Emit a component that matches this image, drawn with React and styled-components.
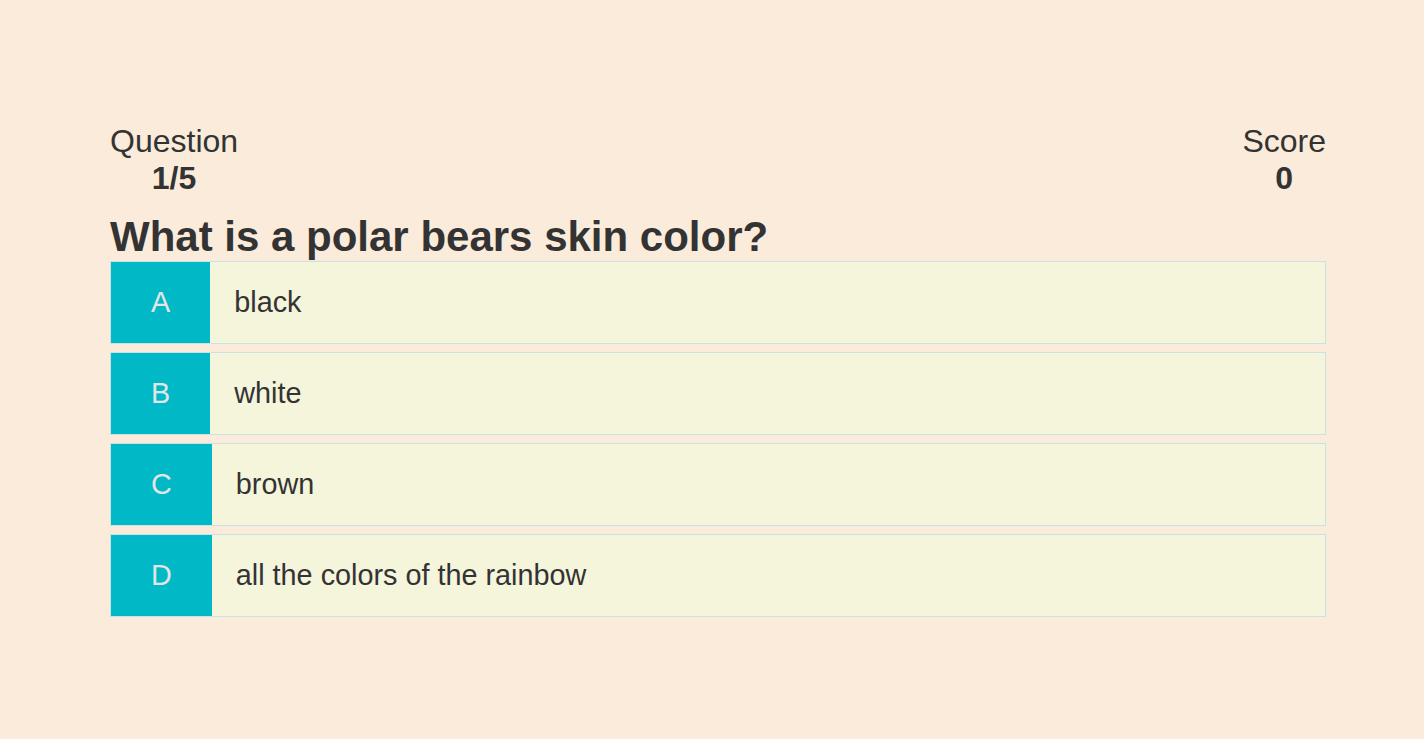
import React from "react";
import styled, { createGlobalStyle } from "styled-components";

const GlobalStyle = createGlobalStyle`
  html, body {
    margin: 0;
    padding: 0;
    background: #faebdb;
  }
  body {
    font-family: "Liberation Sans", Arial, Helvetica, sans-serif;
    color: #333333;
  }
`;

const Page = styled.div`
  min-height: 739px;
  padding: 123px 0 0 110px;
  box-sizing: border-box;
`;

const Quiz = styled.div`
  width: 1216px;
`;

const Header = styled.div`
  display: flex;
  justify-content: space-between;
  align-items: flex-start;
`;

const Stat = styled.div`
  display: flex;
  flex-direction: column;
  align-items: center;
  font-size: 32px;
  line-height: normal;
`;

const StatLabel = styled.span`
  font-weight: 400;
`;

const StatValue = styled.span`
  font-weight: 700;
`;

const QuestionText = styled.h1`
  margin: 16px 0 0 0;
  font-size: 42px;
  font-weight: 700;
  line-height: normal;
`;

const Options = styled.div`
  display: flex;
  flex-direction: column;
  gap: 8px;
`;

const Option = styled.button`
  display: flex;
  align-items: stretch;
  height: 83px;
  padding: 0;
  margin: 0;
  border: 1px solid #c9e2e6;
  background: #f5f5dc;
  font-family: inherit;
  text-align: left;
  cursor: pointer;
  box-sizing: border-box;
`;

const Letter = styled.span`
  display: flex;
  align-items: center;
  justify-content: center;
  padding: 0 40px;
  background: #00b8c6;
  color: #e3e6e6;
  font-size: 28.8px;
`;

const Answer = styled.span`
  display: flex;
  align-items: center;
  padding-left: 24px;
  color: #333333;
  font-size: 28.8px;
`;

const answers = [
  { letter: "A", text: "black" },
  { letter: "B", text: "white" },
  { letter: "C", text: "brown" },
  { letter: "D", text: "all the colors of the rainbow" },
];

export default function App() {
  return (
    <>
      <GlobalStyle />
      <Page>
        <Quiz>
          <Header>
            <Stat>
              <StatLabel>Question</StatLabel>
              <StatValue>1/5</StatValue>
            </Stat>
            <Stat>
              <StatLabel>Score</StatLabel>
              <StatValue>0</StatValue>
            </Stat>
          </Header>
          <QuestionText>What is a polar bears skin color?</QuestionText>
          <Options>
            {answers.map((a) => (
              <Option key={a.letter}>
                <Letter>{a.letter}</Letter>
                <Answer>{a.text}</Answer>
              </Option>
            ))}
          </Options>
        </Quiz>
      </Page>
    </>
  );
}
